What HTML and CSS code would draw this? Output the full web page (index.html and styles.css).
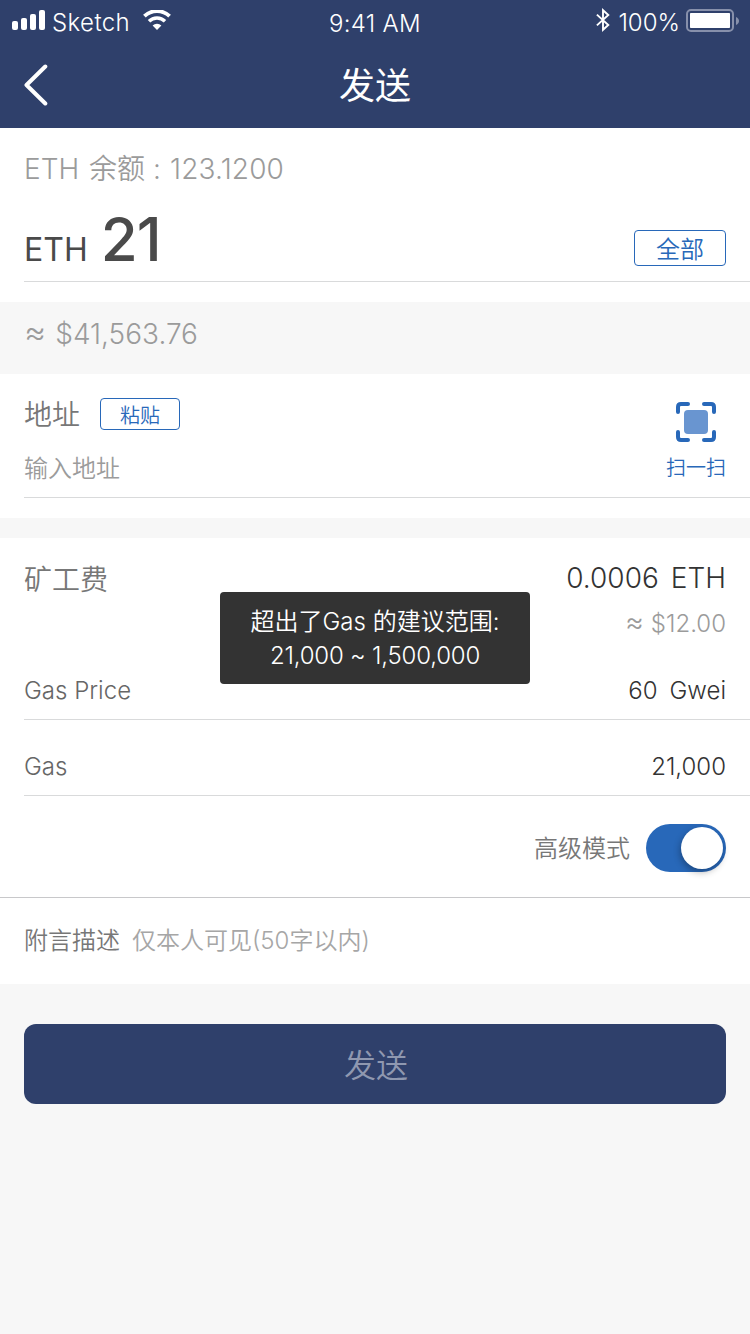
FILE: index.html
```html
<!DOCTYPE html>
<html lang="zh-CN">
<head>
<meta charset="utf-8">
<title>发送</title>
<link rel="stylesheet" href="styles.css">
</head>
<body>
<div class="screen">
  <header class="header">
    <div class="status">
      <div class="status-left">
        <svg class="signal" width="34" height="20" viewBox="0 0 34 20" fill="#fff">
          <rect x="0" y="11" width="6" height="9" rx="2"/><rect x="9" y="8" width="6" height="12" rx="2"/><rect x="18" y="4" width="6" height="16" rx="2"/><rect x="27" y="0" width="6" height="20" rx="2"/>
        </svg>
        <span class="carrier">Sketch</span>
        <svg class="wifi" width="28" height="20" viewBox="0 0 28 20">
          <path d="M1.4 6.2a18 18 0 0 1 25.2 0" fill="none" stroke="#fff" stroke-width="3.8"/>
          <path d="M6 11.3a11.4 11.4 0 0 1 16 0" fill="none" stroke="#fff" stroke-width="3.5"/>
          <path d="M14 20l-4.4-4.4a6.3 6.3 0 0 1 8.8 0z" fill="#fff"/>
        </svg>
      </div>
      <span class="time">9:41 AM</span>
      <div class="status-right">
        <svg class="bluetooth" width="14" height="24" viewBox="0 0 14 24" fill="none" stroke="#fff" stroke-width="1.9">
          <path d="M.9 6.6L12.3 17 7 21.8V2.2L12.3 7 .9 17.400"/>
        </svg>
        <span class="percent">100%</span>
        <svg class="battery" width="54" height="24" viewBox="0 0 54 24">
          <rect x="1" y="1" width="46" height="21" rx="4" fill="none" stroke="#8790ab" stroke-width="2"/>
          <rect x="4" y="4" width="40" height="15" rx=".8" fill="#fff"/>
          <path d="M50 8c4 1.500 4 6.500 0 8z" fill="#8790ab"/>
        </svg>
      </div>
    </div>
    <nav class="nav">
      <svg class="back" width="24" height="42" viewBox="0 0 24 42" fill="none" stroke="#fff" stroke-width="4" stroke-linecap="round" stroke-linejoin="round"><path d="M21.300 2.500L2.500 21 21.300 39.500"/></svg>
      <h1 class="title">发送</h1>
    </nav>
  </header>

  <section class="amount">
    <p class="balance">ETH <span class="balance-name">余额</span><span class="colon">:</span><span class="balance-value">123.1200</span></p>
    <div class="amount-row">
      <div class="amount-value"><span class="unit">ETH</span><span class="number">21</span></div>
      <button class="outline all">全部</button>
    </div>
  </section>
  <p class="fiat"><span class="approx">≈</span>$41,563.76</p>

  <section class="address">
    <div class="address-body">
      <div class="address-main">
        <div class="address-head"><span class="label">地址</span><button class="outline paste">粘贴</button></div>
        <p class="placeholder">输入地址</p>
      </div>
      <div class="scan">
        <svg width="40" height="40" viewBox="0 0 40 40" fill="none" stroke="#2868b9" stroke-width="4" stroke-linecap="round">
          <rect x="8" y="8" width="24" height="24" rx="4" fill="#6995d0" stroke="none"/>
          <path d="M2 10V5q0-3 3-3h7M28 2h7q3 0 3 3v5M38 30v5q0 3-3 3h-7M12 38H5q-3 0-3-3v-5"/>
        </svg>
        <span class="scan-label">扫一扫</span>
      </div>
    </div>
  </section>

  <section class="fee">
    <div class="fee-head">
      <span class="label">矿工费</span>
      <div class="fee-total">
        <p class="fee-eth">0.0006<span class="fee-unit">ETH</span></p>
        <p class="fee-fiat"><span class="approx-small">≈</span>$12.00</p>
      </div>
      <div class="toast"><p class="toast-title">超出了Gas 的建议范围:</p><p class="toast-range">21,000 ~ 1,500,000</p></div>
    </div>
    <div class="field price"><span class="name">Gas Price</span><span class="value">60<span class="gwei">Gwei</span></span></div>
    <div class="field gas"><span class="name">Gas</span><span class="value">21,000</span></div>
    <div class="advanced"><span class="mode">高级模式</span><span class="switch"><span class="knob"></span></span></div>
    <div class="memo"><span class="memo-label">附言描述</span><span class="memo-hint">仅本人可见(50字以内)</span></div>
  </section>

  <button class="submit">发送</button>
</div>
</body>
</html>
```
FILE: styles.css
```css
* { box-sizing: border-box; }
body, h1, p { margin: 0; }
body { background: #f7f7f7; }
.screen {
  width: 750px;
  height: 1334px;
  overflow: hidden;
  background: #f7f7f7;
  font-family: Inter, "Noto Sans CJK SC", sans-serif;
  font-weight: 350;
  white-space: nowrap;
}
svg { display: block; flex: none; }
button { font: inherit; }

.header { height: 128px; background: #2f406b; color: #fff; }
.status {
  height: 40px;
  display: grid;
  grid-template-columns: 1fr auto 1fr;
  padding: 0 10px 0 12px;
  font-size: 24px;
  line-height: 28px;
}
.status-left, .status-right { display: flex; align-items: flex-start; }
.status-right { justify-content: flex-end; }
.signal { margin-top: 10px; }
.carrier { width: 78px; margin: 9px 0 0 6px; letter-spacing: .4px; }
.wifi { margin: 10px 0 0 13px; }
.time { margin: 10px 2px 0 0; letter-spacing: .3px; }
.bluetooth { margin-top: 8px; }
.percent { margin: 9px 0 0 8px; }
.battery { margin: 9px 0 0 6px; }
.nav {
  height: 88px;
  padding: 2px 24px 0;
  display: grid;
  grid-template-columns: 1fr auto 1fr;
  align-items: center;
}
.title { padding-top: 2px; font-size: 36px; line-height: 50px; font-weight: 400; }

.amount { height: 174px; padding: 21px 0 0 24px; background: #fff; }
.balance { font-size: 28px; line-height: 40px; color: #9b9b9b; }
.balance-name { margin-left: 2px; }
.colon { margin: 0 9px 0 8px; }
.balance-value { letter-spacing: .15px; }
.amount-row {
  height: 93px;
  display: flex;
  justify-content: space-between;
  border-bottom: 1px solid #d9dadb;
  padding-right: 24px;
}
.amount-value { color: #4a4a4a; font-weight: 500; line-height: 84px; margin-top: 8px; }
.unit { font-size: 32px; font-weight: 400; }
.number { font-size: 60px; margin-left: 13px; letter-spacing: -1px; }
.outline {
  padding: 0;
  border: 1px solid #2868b9;
  border-radius: 4px;
  background: #fff;
  color: #2868b9;
}
.all { width: 92px; height: 36px; margin-top: 41px; padding-top: 2px; font-size: 24px; line-height: 34px; }
.fiat { height: 72px; padding: 12px 24px 0; font-size: 28px; line-height: 40px; color: #9b9b9b; }
.approx { margin-right: 9px; font-size: 34px; line-height: 1; }

.address { height: 144px; padding-left: 24px; background: #fff; }
.address-body {
  height: 124px;
  padding: 20px 24px 0 0;
  display: flex;
  justify-content: space-between;
  border-bottom: 1px solid #d9dadb;
}
.address-head { display: flex; align-items: center; gap: 20px; height: 40px; }
.label { padding-top: 1px; font-size: 28px; line-height: 42px; color: #777; }
.paste { width: 80px; height: 32px; padding-top: 2px; font-size: 20px; line-height: 30px; }
.placeholder { margin-top: 18px; font-size: 24px; line-height: 34px; color: #9b9b9b; }
.scan { display: flex; flex-direction: column; align-items: center; padding-top: 8px; }
.scan-label { margin-top: 12px; font-size: 20px; line-height: 28px; color: #2868b9; }

.fee { height: 446px; margin-top: 20px; background: #fff; }
.fee-head { position: relative; height: 122px; display: flex; justify-content: space-between; padding: 20px 24px 0; }
.fee-total { text-align: right; }
.fee-eth { font-size: 28px; line-height: 40px; color: #333; }
.fee-unit { margin-left: 12px; }
.fee-fiat { margin-top: 9px; font-size: 24px; line-height: 34px; color: #9b9b9b; }
.approx-small { margin-right: 7px; font-size: 29px; line-height: 1; }
.toast {
  position: absolute;
  left: 220px;
  top: 54px;
  width: 310px;
  height: 92px;
  padding-top: 13px;
  border-radius: 4px;
  background: #333;
  color: #fff;
  text-align: center;
  font-size: 24px;
  line-height: 34px;
}
.toast-range { letter-spacing: -.2px; }
.field {
  margin-left: 24px;
  padding-right: 24px;
  display: flex;
  justify-content: space-between;
  border-bottom: 1px solid #d9dadb;
  font-size: 24px;
}
.price { height: 60px; line-height: 62px; }
.gas { height: 76px; line-height: 94px; }
.name { color: #666; }
.value { color: #333; }
.gwei { margin-left: 12px; }
.advanced {
  height: 102px;
  padding: 2px 24px 0;
  display: flex;
  align-items: center;
  justify-content: flex-end;
  gap: 16px;
  border-bottom: 1px solid #c8c8ca;
}
.mode { padding-top: 2px; font-size: 24px; color: #777; line-height: 34px; }
.switch { width: 80px; height: 48px; display: flex; justify-content: flex-end; padding: 3px; border-radius: 24px; background: #2868b9; }
.knob { width: 42px; height: 42px; border-radius: 50%; background: #fff; box-shadow: -1px 3px 7px rgba(0, 0, 0, .3); }
.memo { height: 86px; padding: 0 24px; font-size: 24px; line-height: 86px; color: #777; }
.memo-hint { margin-left: 12px; color: #a6a6a6; }
.submit {
  display: block;
  width: 702px;
  height: 80px;
  margin: 40px 24px 0;
  padding: 0 0 2px 2px;
  border: 0;
  border-radius: 12px;
  background: #2f406b;
  color: #8f98b0;
  font-size: 32px;
}
```
